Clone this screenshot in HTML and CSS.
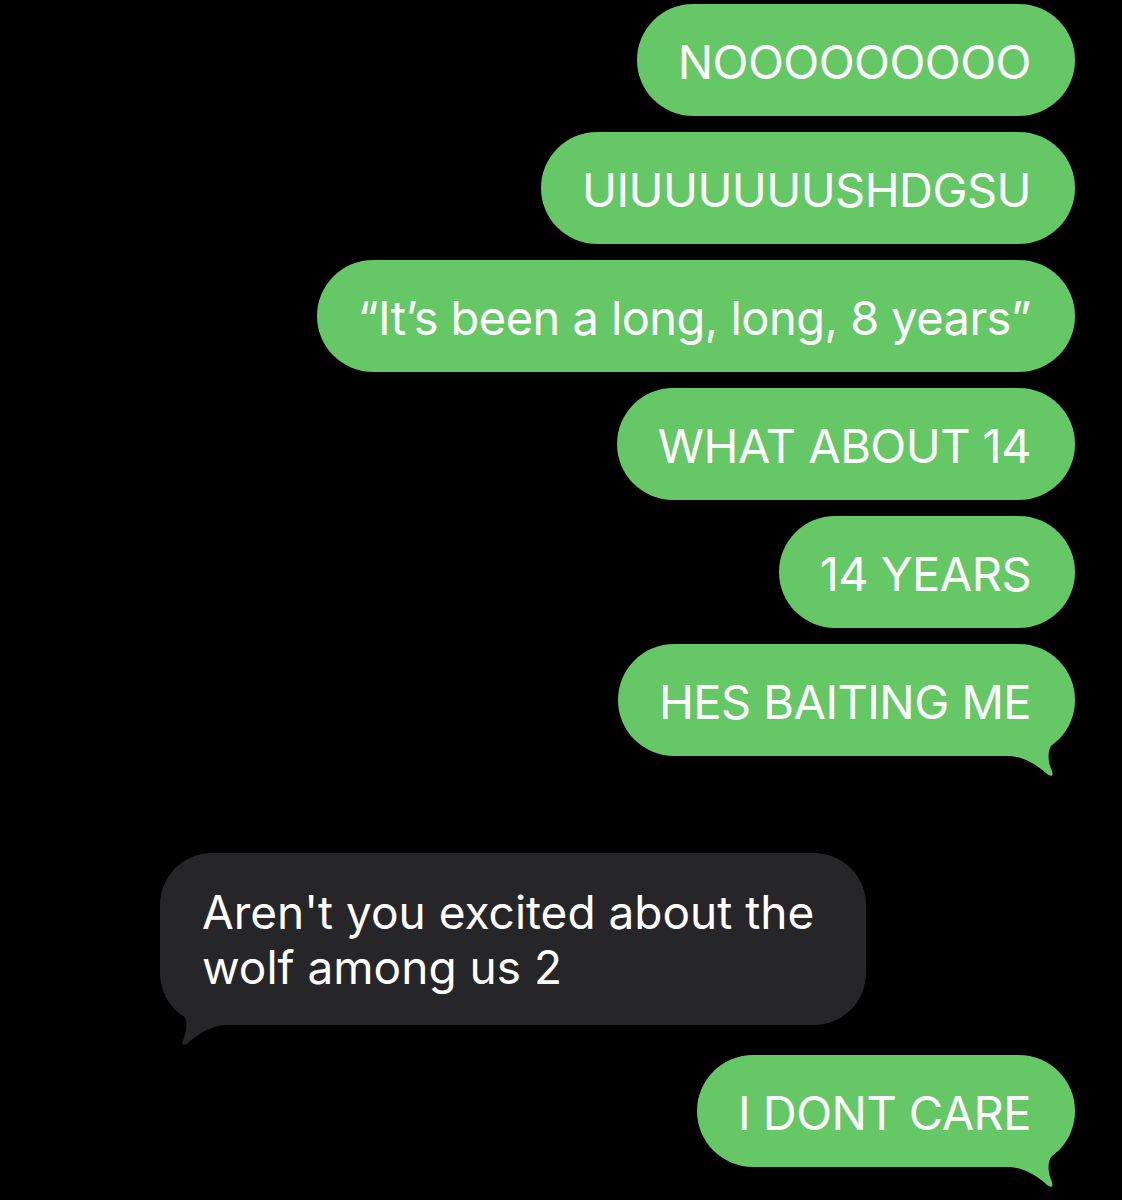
FILE: index.html
```html
<!DOCTYPE html>
<html lang="en">
<head>
  <meta charset="UTF-8" />
  <title>Messages</title>
  <meta name="viewport" content="width=device-width, initial-scale=1.0" />
  <link rel="stylesheet" href="styles.css">
</head>
<body>

  <main class="thread">
    <div class="bubble sent">NOOOOOOOOO</div>
    <div class="bubble sent">UIUUUUUUSHDGSU</div>
    <div class="bubble sent">&ldquo;It&rsquo;s been a long, long, 8 years&rdquo;</div>
    <div class="bubble sent">WHAT ABOUT 14</div>
    <div class="bubble sent">14 YEARS</div>
    <div class="bubble sent last">
      HES BAITING ME
      <svg class="tail" viewBox="0 0 75 52"><path d="M0,0 L0,32 L10,32 C25,33 38,42 46,49 C50,53 54,53 52,47 C49,40 46,30 52,20 C56,13 62,7 70,0 Z"/></svg>
    </div>

    <!-- incoming -->
    <div class="bubble received">
      Aren't you excited about the wolf among us 2
      <svg class="tail" viewBox="0 0 75 52"><path d="M0,0 L0,32 L10,32 C25,33 38,42 46,49 C50,53 54,53 52,47 C49,40 46,30 52,20 C56,13 62,7 70,0 Z"/></svg>
    </div>

    <div class="bubble sent last reply">
      I DONT CARE
      <svg class="tail" viewBox="0 0 75 52"><path d="M0,0 L0,32 L10,32 C25,33 38,42 46,49 C50,53 54,53 52,47 C49,40 46,30 52,20 C56,13 62,7 70,0 Z"/></svg>
    </div>
  </main>

</body>
</html>
```

FILE: styles.css
```css
body {
  margin: 0;
  padding: 0;
  background: #000;
  font-family: Inter, 'Liberation Sans', sans-serif;
  color: #fff;
  overflow: hidden;
}

.thread {
  display: flex;
  flex-direction: column;
  align-items: flex-end;
  gap: 16px;
  padding: 4px 47px 40px 160px;
}

.bubble {
  position: relative;
  box-sizing: border-box;
  height: 112px;
  padding: 3px 44px 0 41px;
  border-radius: 56px;
  font-size: 47px;
  letter-spacing: -0.55px;
  line-height: 109px;
  white-space: nowrap;
}

.sent {
  background: #66c766;
}

.sent .tail {
  fill: #66c766;
}

.tail {
  position: absolute;
  right: 0;
  bottom: -20px;
  width: 75px;
  height: 52px;
}

.received {
  align-self: flex-start;
  width: 706px;
  height: auto;
  margin-top: 81px;
  padding: 32px 40px 30px 42px;
  border-radius: 52px;
  background: #262629;
  font-size: 46px;
  letter-spacing: 0;
  line-height: 55px;
  white-space: normal;
}

.received .tail {
  left: 0;
  right: auto;
  fill: #262629;
  transform: scaleX(-1);
}

.reply {
  margin-top: 14px;
}
```
